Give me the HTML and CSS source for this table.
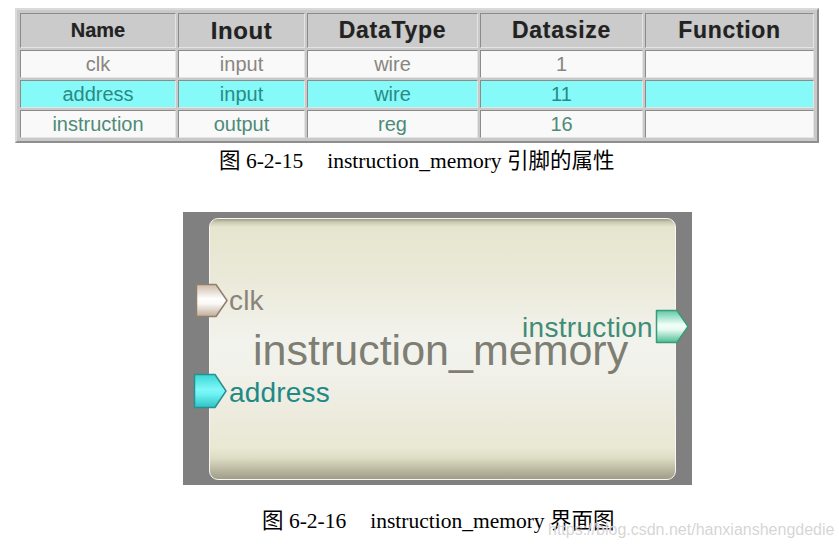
FILE: index.html
```html
<!DOCTYPE html>
<html lang="zh">
<head>
<meta charset="utf-8">
<title>instruction_memory</title>
<link rel="stylesheet" href="styles.css">
</head>
<body>
<div class="page">
  <table class="pins">
    <thead>
      <tr>
        <th class="c-name h-small">Name</th>
        <th class="c-inout h-big">Inout</th>
        <th class="c-type">DataType</th>
        <th class="c-size">Datasize</th>
        <th class="c-func">Function</th>
      </tr>
    </thead>
    <tbody>
      <tr class="row-clk">
        <td>clk</td><td>input</td><td>wire</td><td>1</td><td></td>
      </tr>
      <tr class="row-addr">
        <td>address</td><td>input</td><td>wire</td><td>11</td><td></td>
      </tr>
      <tr class="row-instr">
        <td>instruction</td><td>output</td><td>reg</td><td>16</td><td></td>
      </tr>
    </tbody>
  </table>

  <p class="caption cap1">图 6-2-15<span class="gap"></span>instruction_memory 引脚的属性</p>

  <div class="symbol">
    <div class="panel"></div>

    <svg class="port port-clk" width="34" height="35" viewBox="0 0 34 35">
      <defs>
        <linearGradient id="gclk" x1="0" y1="0" x2="0" y2="1">
          <stop offset="0" stop-color="#cdbba8"/>
          <stop offset="0.45" stop-color="#ffffff"/>
          <stop offset="0.6" stop-color="#fbf8f4"/>
          <stop offset="1" stop-color="#bfac98"/>
        </linearGradient>
      </defs>
      <polygon points="1.5,1.5 21,1.5 32,17.5 21,33.5 1.5,33.5" fill="url(#gclk)" stroke="#8f7f6e" stroke-width="1.5" stroke-linejoin="round"/>
    </svg>
    <span class="pin-label lbl-clk">clk</span>

    <svg class="port port-addr" width="35" height="36" viewBox="0 0 35 36">
      <defs>
        <linearGradient id="gaddr" x1="0" y1="0" x2="0" y2="1">
          <stop offset="0" stop-color="#38d6d6"/>
          <stop offset="0.45" stop-color="#7ff8f8"/>
          <stop offset="0.6" stop-color="#6ef2f2"/>
          <stop offset="1" stop-color="#2ec2c4"/>
        </linearGradient>
      </defs>
      <polygon points="1.5,1.5 22,1.5 33,18 22,34.5 1.5,34.5" fill="url(#gaddr)" stroke="#2a8f90" stroke-width="1.5" stroke-linejoin="round"/>
    </svg>
    <span class="pin-label lbl-addr">address</span>

    <svg class="port port-instr" width="35" height="35" viewBox="0 0 35 35">
      <defs>
        <linearGradient id="ginstr" x1="0" y1="0" x2="0" y2="1">
          <stop offset="0" stop-color="#5ccaa4"/>
          <stop offset="0.45" stop-color="#f4fffa"/>
          <stop offset="0.6" stop-color="#e6faf2"/>
          <stop offset="1" stop-color="#4cbc94"/>
        </linearGradient>
      </defs>
      <polygon points="1.5,1.5 22,1.5 33,17.5 22,33.5 1.5,33.5" fill="url(#ginstr)" stroke="#3a9a7a" stroke-width="1.5" stroke-linejoin="round"/>
    </svg>
    <span class="pin-label lbl-instr">instruction</span>

    <span class="module-name">instruction_memory</span>
  </div>

  <p class="caption cap2">图 6-2-16<span class="gap"></span>instruction_memory 界面图</p>

  <span class="watermark">https://blog.csdn.net/hanxianshengdedie</span>
</div>
</body>
</html>
```

FILE: styles.css
```css
html, body {
  margin: 0;
  padding: 0;
  background: #ffffff;
}

.page {
  position: relative;
  width: 839px;
  height: 550px;
  overflow: hidden;
  font-family: "Liberation Sans", Arial, sans-serif;
}

/* ---------- pin table ---------- */
.pins {
  margin: 8px 0 0 15px;
  border-collapse: separate;
  border-spacing: 2px;
  padding: 1px;
  background: #c9c9c9;
  border: 2px solid;
  border-color: #dadada #8e8e8e #8e8e8e #dadada;
  table-layout: fixed;
}

.pins th,
.pins td {
  box-sizing: border-box;
  padding: 0;
  border: 1px solid;
  border-color: #8b8b8b #e4e4e4 #e4e4e4 #8b8b8b;
  text-align: center;
  vertical-align: middle;
  white-space: nowrap;
}

.pins th {
  height: 35px;
  background: #cbcbcb;
  color: #222222;
  font-size: 23px;
  font-weight: bold;
  letter-spacing: 0.7px;
  text-shadow: 0 0 1px rgba(0,0,0,0.25);
}

.pins th.h-small { font-size: 20px; letter-spacing: 0; }
.pins th.h-big { font-size: 24px; letter-spacing: 0.6px; }

.c-name  { width: 156px; }
.c-inout { width: 127px; }
.c-type  { width: 171px; }
.c-size  { width: 163px; }
.c-func  { width: 169px; }

.pins td {
  height: 28px;
  font-size: 20px;
  background: #f9f9f9;
}

.row-clk td   { color: #8a8580; }
.row-addr td  { color: #2a8a84; background: #86faf8; }
.row-instr td { color: #4e8a78; }

/* ---------- captions ---------- */
.caption {
  margin: 0;
  font-family: "Liberation Serif", "Noto Sans CJK SC", serif;
  font-size: 21.5px;
  line-height: 24px;
  color: #000000;
  white-space: nowrap;
}

.caption .gap {
  display: inline-block;
  width: 24px;
}

.cap1 {
  margin-top: 6px;
  padding-left: 219px;
}

.cap2 {
  margin-top: 24px;
  padding-left: 262px;
}

/* ---------- schematic symbol ---------- */
.symbol {
  position: relative;
  box-sizing: border-box;
  width: 509px;
  height: 273px;
  margin: 39px 0 0 183px;
  padding: 6px 16px 5px 26px;
  background: #808080;
  display: flex;
}

.panel {
  flex: 1;
  box-sizing: border-box;
  border: 1.5px solid #f6f6f3;
  border-radius: 9px;
  background: linear-gradient(to bottom,
    #9c9b82 0px,
    #c9c8b0 3px,
    #e6e5ce 8px,
    #ebeada 25%,
    #f3f3ee 48%,
    #f2f2ec 56%,
    #eceadb 78%,
    #e9e8d3 88%,
    #dddcc4 92%,
    #bebca5 96%,
    #9f9d87 100%);
}

.port {
  position: absolute;
  display: block;
}

.port-clk   { left: 12px;  top: 71px; }
.port-addr  { left: 10px;  top: 161px; }
.port-instr { left: 472px; top: 97px; }

.pin-label {
  position: absolute;
  font-size: 28px;
  line-height: 28px;
  letter-spacing: 0.2px;
  white-space: nowrap;
}

.lbl-clk   { left: 46px;  top: 75px;  color: #8a847c; }
.lbl-addr  { left: 46px;  top: 167px; color: #1e8a86; }
.lbl-instr { right: 39px; top: 102px; color: #3f8c78; letter-spacing: 0.3px; }

.module-name {
  position: absolute;
  left: 70px;
  top: 117px;
  font-size: 43px;
  line-height: 43px;
  color: #7e7e73;
  white-space: nowrap;
}

/* ---------- watermark ---------- */
.watermark {
  position: absolute;
  left: 548px;
  top: 521px;
  font-family: "Liberation Sans", Arial, sans-serif;
  font-size: 16px;
  line-height: 18px;
  color: rgba(195, 195, 195, 0.7);
  text-shadow: 0 0 1px #ffffff;
  white-space: nowrap;
}
```
